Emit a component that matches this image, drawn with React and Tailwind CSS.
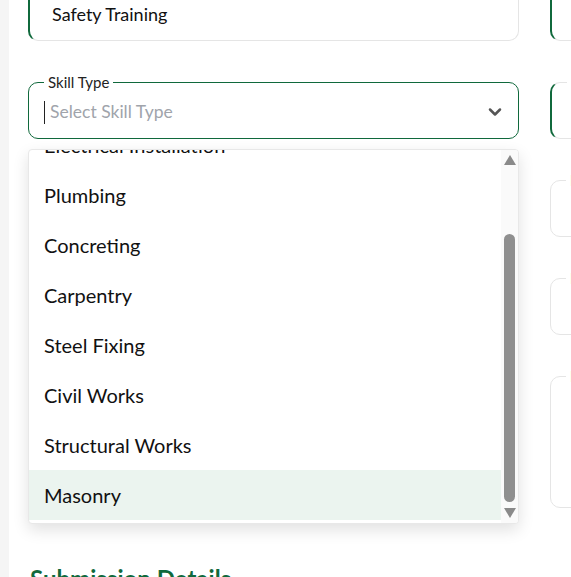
import { ChevronDown } from 'lucide-react';

const skills = [
    'Electrical Installation',
    'Plumbing',
    'Concreting',
    'Carpentry',
    'Steel Fixing',
    'Civil Works',
    'Structural Works',
    'Masonry',
];

// Fieldset with the label sitting on the top border
const Field = ({ label, variant = 'plain', tall = false, labelClass = 'text-[#222]', children }) => {
    const borders = {
        focused: 'border border-[#10693c]',
        accent: 'border border-[#e5e5e5] border-l-2 border-l-[#10693c]',
        plain: 'border border-[#e5e5e5]',
    };
    return (
        <fieldset className={`${borders[variant]} rounded-[10px] px-[15px] m-0 min-w-0 ${tall ? 'h-[140px]' : 'h-[65px]'}`}>
            <legend className={`px-[4px] text-[15px] leading-[16px] ${labelClass}`}>{label}</legend>
            <div className="h-[48px] pb-1 flex items-center">{children}</div>
        </fieldset>
    );
};

const SkillDropdown = () => (
    <div className="absolute left-0 right-0 top-[75px] z-10 h-[375px] bg-white rounded-[4px] border border-[#e8e8e8] shadow-[0_6px_16px_rgba(0,0,0,0.12)] flex overflow-hidden">
        <div className="flex-1 overflow-hidden">
            <ul className="-mt-[30px]">
                {skills.map((s) => (
                    <li
                        key={s}
                        className={`h-[50px] flex items-center pl-[15px] text-[20px] text-[#111] ${s === 'Masonry' ? 'bg-[#ebf4ef]' : ''}`}
                    >
                        {s}
                    </li>
                ))}
            </ul>
        </div>
        {/* scrollbar */}
        <div className="w-[17px] bg-[#fafafa] flex flex-col items-center py-[5px]">
            <svg width="12" height="10" viewBox="0 0 12 10"><polygon points="6,0 12,10 0,10" fill="#8a8a8a" /></svg>
            <div className="mt-[69px] h-[268px] w-[11px] rounded-full bg-[#8f8f8f]" />
            <svg className="mt-auto" width="12" height="10" viewBox="0 0 12 10"><polygon points="0,0 12,0 6,10" fill="#8a8a8a" /></svg>
        </div>
    </div>
);

export default function App() {
    return (
        <div className="flex h-screen overflow-hidden bg-white" style={{ fontFamily: 'Lato, "Open Sans", sans-serif' }}>
            <div className="w-[9px] shrink-0 bg-[#f5f5f5]" />
            <div className="flex-1 min-w-0 pl-[19px] overflow-hidden">
                <div className="-mt-[24px] grid grid-cols-[491px_491px] gap-x-[31px] gap-y-[33px]">
                    <Field label="Training Name" variant="accent">
                        <span className="text-[18px] text-[#111] pl-[7px]">Safety Training</span>
                    </Field>
                    <Field label="Provider" variant="accent" />

                    <div className="relative">
                        <Field label="Skill Type" variant="focused">
                            <span className="w-px h-[23px] bg-[#222]" />
                            <span className="flex-1 pl-[5px] text-[17.5px] text-[#a0a4ab]">Select Skill Type</span>
                            <ChevronDown size={20} strokeWidth={3} className="text-[#555] -mr-[2px]" />
                        </Field>
                        <SkillDropdown />
                    </div>
                    <Field label="Status" variant="accent" labelClass="text-[#d98a1f]" />

                    <Field label="Level" />
                    <Field label="Issue Date" labelClass="text-[#e6902a]" />

                    <Field label="Hours" />
                    <Field label="Expiry Date" labelClass="text-[#e6902a]" />

                    <Field label="Location" tall />
                    <Field label="Notes" tall labelClass="text-[#e6902a]" />
                </div>
                <h2 className="mt-[53px] pl-[2px] text-[24px] font-bold text-[#10693c]">Submission Details</h2>
            </div>
        </div>
    );
}
